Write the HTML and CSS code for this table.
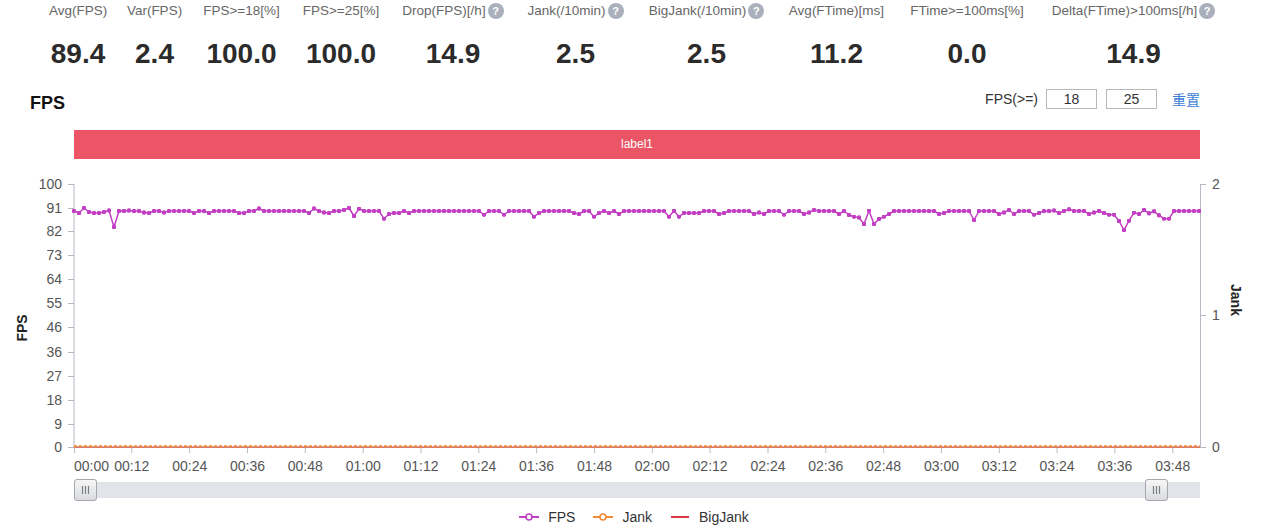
FILE: index.html
```html
<!DOCTYPE html>
<html lang="zh">
<head>
<meta charset="utf-8">
<title>FPS</title>
<link rel="stylesheet" href="styles.css">
</head>
<body>
<div class="stats">
  <div class="stat"><div class="stat-label">Avg(FPS)</div><div class="stat-value">89.4</div></div>
  <div class="stat"><div class="stat-label">Var(FPS)</div><div class="stat-value">2.4</div></div>
  <div class="stat"><div class="stat-label">FPS&gt;=18[%]</div><div class="stat-value">100.0</div></div>
  <div class="stat"><div class="stat-label">FPS&gt;=25[%]</div><div class="stat-value">100.0</div></div>
  <div class="stat"><div class="stat-label">Drop(FPS)[/h]<span class="help">?</span></div><div class="stat-value">14.9</div></div>
  <div class="stat"><div class="stat-label">Jank(/10min)<span class="help">?</span></div><div class="stat-value">2.5</div></div>
  <div class="stat"><div class="stat-label">BigJank(/10min)<span class="help">?</span></div><div class="stat-value">2.5</div></div>
  <div class="stat"><div class="stat-label">Avg(FTime)[ms]</div><div class="stat-value">11.2</div></div>
  <div class="stat"><div class="stat-label">FTime&gt;=100ms[%]</div><div class="stat-value">0.0</div></div>
  <div class="stat"><div class="stat-label">Delta(FTime)&gt;100ms[/h]<span class="help">?</span></div><div class="stat-value">14.9</div></div>
</div>

<div class="section-head">
  <h2 class="section-title">FPS</h2>
  <div class="threshold">
    <span class="threshold-label">FPS(&gt;=)</span>
    <input class="threshold-input" type="text" value="18">
    <input class="threshold-input" type="text" value="25">
    <a class="reset-link">重置</a>
  </div>
</div>

<div class="label-bar">label1</div>

<svg class="chart" width="1267" height="340" viewBox="0 165 1267 340" xmlns="http://www.w3.org/2000/svg">
  <defs>
    <marker id="dot" viewBox="0 0 6 6" refX="3" refY="3" markerWidth="4.4" markerHeight="4.4" markerUnits="userSpaceOnUse">
      <circle cx="3" cy="3" r="3" fill="#c23fc4"/>
    </marker>
    <linearGradient id="handleGrad" x1="0" y1="0" x2="0" y2="1">
      <stop offset="0" stop-color="#f7f7f7"/>
      <stop offset="1" stop-color="#d9dbde"/>
    </linearGradient>
  </defs>

  <!-- left axis -->
  <line class="axis-line" x1="74" y1="184" x2="74" y2="447.5"/>
  <g class="axis-tick">
    <line x1="68" y1="184.5" x2="74" y2="184.5"/>
    <line x1="68" y1="208.5" x2="74" y2="208.5"/>
    <line x1="68" y1="231.5" x2="74" y2="231.5"/>
    <line x1="68" y1="255.5" x2="74" y2="255.5"/>
    <line x1="68" y1="279.5" x2="74" y2="279.5"/>
    <line x1="68" y1="303.5" x2="74" y2="303.5"/>
    <line x1="68" y1="327.5" x2="74" y2="327.5"/>
    <line x1="68" y1="352.5" x2="74" y2="352.5"/>
    <line x1="68" y1="376.5" x2="74" y2="376.5"/>
    <line x1="68" y1="400.5" x2="74" y2="400.5"/>
    <line x1="68" y1="424.5" x2="74" y2="424.5"/>
    <line x1="68" y1="447.5" x2="74" y2="447.5"/>
  </g>
  <g class="axis-text axis-text-right">
    <text x="62" y="189">100</text>
    <text x="62" y="213">91</text>
    <text x="62" y="236">82</text>
    <text x="62" y="260">73</text>
    <text x="62" y="284">64</text>
    <text x="62" y="308">55</text>
    <text x="62" y="332">46</text>
    <text x="62" y="357">36</text>
    <text x="62" y="381">27</text>
    <text x="62" y="405">18</text>
    <text x="62" y="429">9</text>
    <text x="62" y="452">0</text>
  </g>
  <text class="axis-name" transform="translate(27 328) rotate(-90)">FPS</text>

  <!-- right axis -->
  <line class="axis-line" x1="1200.5" y1="184" x2="1200.5" y2="447.5"/>
  <g class="axis-tick">
    <line x1="1200.5" y1="184.5" x2="1206" y2="184.5"/>
    <line x1="1200.5" y1="315.5" x2="1206" y2="315.5"/>
    <line x1="1200.5" y1="447.5" x2="1206" y2="447.5"/>
  </g>
  <g class="axis-text">
    <text x="1212" y="189">2</text>
    <text x="1212" y="320">1</text>
    <text x="1212" y="452">0</text>
  </g>
  <text class="axis-name" transform="translate(1231 300) rotate(90)">Jank</text>

  <!-- x axis -->
  <line class="axis-line" x1="74" y1="447.5" x2="1200.5" y2="447.5"/>
  <g class="axis-tick">
    <line x1="74.5" y1="447.5" x2="74.5" y2="453"/>
    <line x1="131.8" y1="447.5" x2="131.8" y2="453"/>
    <line x1="189.7" y1="447.5" x2="189.7" y2="453"/>
    <line x1="247.5" y1="447.5" x2="247.5" y2="453"/>
    <line x1="305.3" y1="447.5" x2="305.3" y2="453"/>
    <line x1="363.2" y1="447.5" x2="363.2" y2="453"/>
    <line x1="421" y1="447.5" x2="421" y2="453"/>
    <line x1="478.8" y1="447.5" x2="478.8" y2="453"/>
    <line x1="536.6" y1="447.5" x2="536.6" y2="453"/>
    <line x1="594.5" y1="447.5" x2="594.5" y2="453"/>
    <line x1="652.3" y1="447.5" x2="652.3" y2="453"/>
    <line x1="710.1" y1="447.5" x2="710.1" y2="453"/>
    <line x1="768" y1="447.5" x2="768" y2="453"/>
    <line x1="825.8" y1="447.5" x2="825.8" y2="453"/>
    <line x1="883.6" y1="447.5" x2="883.6" y2="453"/>
    <line x1="941.5" y1="447.5" x2="941.5" y2="453"/>
    <line x1="999.3" y1="447.5" x2="999.3" y2="453"/>
    <line x1="1057.1" y1="447.5" x2="1057.1" y2="453"/>
    <line x1="1114.9" y1="447.5" x2="1114.9" y2="453"/>
    <line x1="1172.8" y1="447.5" x2="1172.8" y2="453"/>
  </g>
  <g class="axis-text axis-text-mid">
    <text x="74" y="471" class="axis-text-start">00:00</text>
    <text x="131.8" y="471">00:12</text>
    <text x="189.7" y="471">00:24</text>
    <text x="247.5" y="471">00:36</text>
    <text x="305.3" y="471">00:48</text>
    <text x="363.2" y="471">01:00</text>
    <text x="421" y="471">01:12</text>
    <text x="478.8" y="471">01:24</text>
    <text x="536.6" y="471">01:36</text>
    <text x="594.5" y="471">01:48</text>
    <text x="652.3" y="471">02:00</text>
    <text x="710.1" y="471">02:12</text>
    <text x="768" y="471">02:24</text>
    <text x="825.8" y="471">02:36</text>
    <text x="883.6" y="471">02:48</text>
    <text x="941.5" y="471">03:00</text>
    <text x="999.3" y="471">03:12</text>
    <text x="1057.1" y="471">03:24</text>
    <text x="1114.9" y="471">03:36</text>
    <text x="1172.8" y="471">03:48</text>
  </g>

  <!-- series -->
  <line class="bigjank-line" x1="74" y1="447" x2="1200" y2="447"/>
  <line class="jank-line" x1="74" y1="446.3" x2="1200" y2="446.3"/>
  <polyline class="fps-line" points="74,211 79,213 84,208 89,212 94,213 99,213 104,212 109,210.5 114,227 119,211 124,211 129,210.5 134,211 139,211 144,212.5 149,213 154,211 159,211 164,212.5 169,211 174,211 179,211 184,211 189,211 194,213 199,211 204,211 209,213 214,211 219,211 224,211 229,211 234,211 239,213 244,213 249,211 254,211 259,208.5 264,211 269,211 274,211 279,211 284,211 289,211 294,211 299,211 304,211 309,213 314,208.5 319,211 324,212.5 329,213 334,211 339,211 344,210 349,208 354,216 359,208.7 364,211 369,211 374,211 379,211 384,218.7 389,214 394,213 399,213 404,211 409,213 414,211 419,211 424,211 429,211 434,211 439,211 444,211 449,211 454,211 459,211 464,211 469,211 474,211 479,211 484,214.7 489,211 494,211 499,211 504,214.7 509,211 514,211 519,211 524,211 529,211 534,216.7 539,213 544,211 549,211 554,211 559,211 564,211 569,211 574,213 579,214 584,211 589,211 594,216.7 599,213 604,211 609,213 614,211 619,214 624,211 629,211 634,211 639,211 644,211 649,211 654,211 659,211 664,211 669,216.7 674,210.7 679,216.7 684,213 689,213 694,213 699,213 704,211 709,211 714,211 719,214 724,213 729,211 734,211 739,211 744,211 749,211 754,214 759,212.5 764,214 769,211 774,211 779,211 784,214.7 789,211 794,211 799,211 804,214 809,212.5 814,210 819,211 824,211 829,211 834,211 839,214 844,211 849,215 854,216.7 859,217.5 864,224 869,210.7 874,224 879,219 884,216.7 889,214 894,211 899,211 904,211 909,211 914,211 919,211 924,211 929,211 934,211 939,214 944,213 949,211 954,211 959,211 964,211 969,211 974,220 979,211 984,211 989,211 994,211 999,214 1004,212.5 1009,210 1014,214 1019,211 1024,211 1029,211 1034,214.7 1039,213 1044,211 1049,211 1054,210.5 1059,213 1064,211 1069,209.3 1074,211 1079,211 1084,211 1089,214 1094,212.5 1099,211 1104,213 1109,214.7 1114,214.7 1119,221 1124,230 1129,220.7 1134,212.7 1139,214 1144,210 1149,213.3 1154,211.3 1159,215.3 1164,218.7 1169,218.7 1174,211 1179,211 1184,211 1189,211 1194,211 1199,211"/>

  <!-- data zoom slider -->
  <rect class="slider-track" x="74" y="482" width="1126" height="16"/>
  <g class="slider-handle">
    <rect x="74.5" y="479.5" width="22" height="21" rx="2.5"/>
    <line x1="82.5" y1="486" x2="82.5" y2="494"/>
    <line x1="85.5" y1="486" x2="85.5" y2="494"/>
    <line x1="88.5" y1="486" x2="88.5" y2="494"/>
  </g>
  <g class="slider-handle">
    <rect x="1145.5" y="479.5" width="22" height="21" rx="2.5"/>
    <line x1="1153.5" y1="486" x2="1153.5" y2="494"/>
    <line x1="1156.5" y1="486" x2="1156.5" y2="494"/>
    <line x1="1159.5" y1="486" x2="1159.5" y2="494"/>
  </g>
</svg>

<div class="legend">
  <div class="legend-item">
    <svg class="legend-icon" width="20" height="10" viewBox="0 0 20 10"><line x1="0" y1="5" x2="20" y2="5" stroke="#c23fc4" stroke-width="2"/><circle cx="10" cy="5" r="3" fill="#fff" stroke="#c23fc4" stroke-width="1.6"/></svg>
    <span class="legend-text">FPS</span>
  </div>
  <div class="legend-item">
    <svg class="legend-icon" width="20" height="10" viewBox="0 0 20 10"><line x1="0" y1="5" x2="20" y2="5" stroke="#f08a35" stroke-width="2"/><circle cx="10" cy="5" r="3" fill="#fff" stroke="#f08a35" stroke-width="1.6"/></svg>
    <span class="legend-text">Jank</span>
  </div>
  <div class="legend-item">
    <svg class="legend-icon" width="20" height="10" viewBox="0 0 20 10"><line x1="1" y1="5" x2="19" y2="5" stroke="#d93a40" stroke-width="2"/></svg>
    <span class="legend-text">BigJank</span>
  </div>
</div>
</body>
</html>
```

FILE: styles.css
```css
* { box-sizing: border-box; }

html, body {
  margin: 0;
  padding: 0;
  background: #fff;
  width: 1267px;
  height: 529px;
  overflow: hidden;
  font-family: "Liberation Sans", "Noto Sans CJK SC", sans-serif;
  color: #333;
}

.stats {
  display: flex;
  gap: 22px;
  padding: 2px 0 0 50px;
}

.stat {
  display: flex;
  flex-direction: column;
  align-items: center;
  flex: none;
}

.stat:nth-child(1) { width: 56px; }
.stat:nth-child(2) { width: 53px; }
.stat:nth-child(3) { width: 77px; }
.stat:nth-child(4) { width: 78px; }
.stat:nth-child(5) { width: 102px; }
.stat:nth-child(6) { width: 99px; }
.stat:nth-child(7) { width: 119px; }
.stat:nth-child(8) { width: 97px; }
.stat:nth-child(9) { width: 120px; }
.stat:nth-child(10) { width: 169px; }

.stat-label {
  display: flex;
  align-items: center;
  font-size: 13.5px;
  line-height: 18px;
  color: #666;
  white-space: nowrap;
}

.help {
  display: inline-block;
  width: 16px;
  height: 16px;
  margin-left: 2px;
  border-radius: 50%;
  background: #a9afbb;
  color: #fff;
  font-size: 11px;
  font-weight: bold;
  line-height: 16px;
  text-align: center;
}

.stat-value {
  margin-top: 17px;
  font-size: 28px;
  font-weight: bold;
  line-height: 34px;
  color: #2b2b2b;
}

.section-head {
  display: flex;
  justify-content: space-between;
  align-items: flex-start;
  margin-top: 17px;
  padding: 0 67px 0 30px;
}

.section-title {
  margin: 0;
  padding-top: 3px;
  font-size: 18px;
  line-height: 24px;
  font-weight: bold;
  color: #111;
}

.threshold {
  display: flex;
  align-items: center;
  margin-top: 1px;
  height: 20px;
  font-size: 14px;
  color: #333;
}

.threshold-label {
  margin-right: 8px;
}

.threshold-input {
  width: 51px;
  height: 20px;
  margin: 0 9px 0 0;
  padding: 0;
  border: 1px solid #b8b8b8;
  font-family: inherit;
  font-size: 14px;
  color: #333;
  text-align: center;
  outline: none;
}

.reset-link {
  margin-left: 6px;
  color: #3f7fd6;
  font-size: 14px;
  cursor: pointer;
}

.label-bar {
  margin: 15px 67px 0 74px;
  height: 29px;
  line-height: 29px;
  background: #eb5566;
  color: #fff;
  font-size: 12px;
  text-align: center;
}

.chart {
  display: block;
  margin-top: 6px;
}

.axis-line {
  stroke: #b4b9c2;
  stroke-width: 1;
  fill: none;
}

.axis-tick line {
  stroke: #b4b9c2;
  stroke-width: 1;
}

.axis-text text {
  font-family: "Liberation Sans", sans-serif;
  font-size: 14px;
  fill: #555;
}

.axis-text-right text {
  text-anchor: end;
}

.axis-text-mid text {
  text-anchor: middle;
}

.axis-text-mid .axis-text-start {
  text-anchor: start;
}

.axis-name {
  font-family: "Liberation Sans", sans-serif;
  font-size: 14px;
  font-weight: bold;
  fill: #222;
  text-anchor: middle;
}

.fps-line {
  fill: none;
  stroke: #c23fc4;
  stroke-width: 1.5;
  stroke-linejoin: round;
  marker-start: url(#dot);
  marker-mid: url(#dot);
  marker-end: url(#dot);
}

.jank-line {
  stroke: #f08a35;
  stroke-width: 2.2;
  stroke-dasharray: 3 2;
}

.bigjank-line {
  stroke: #d93a40;
  stroke-width: 1.2;
}

.slider-track {
  fill: #e1e5ea;
}

.slider-handle rect {
  fill: url(#handleGrad);
  stroke: #a4a7ad;
  stroke-width: 1;
}

.slider-handle line {
  stroke: #7c7f86;
  stroke-width: 1.2;
}

.legend {
  display: flex;
  justify-content: center;
  align-items: center;
  gap: 18px;
  height: 24px;
  padding-left: 1px;
}

.legend-item {
  display: flex;
  align-items: center;
}

.legend-icon {
  display: block;
  margin-right: 9px;
}

.legend-text {
  font-size: 14px;
  color: #333;
  line-height: 24px;
}
```
